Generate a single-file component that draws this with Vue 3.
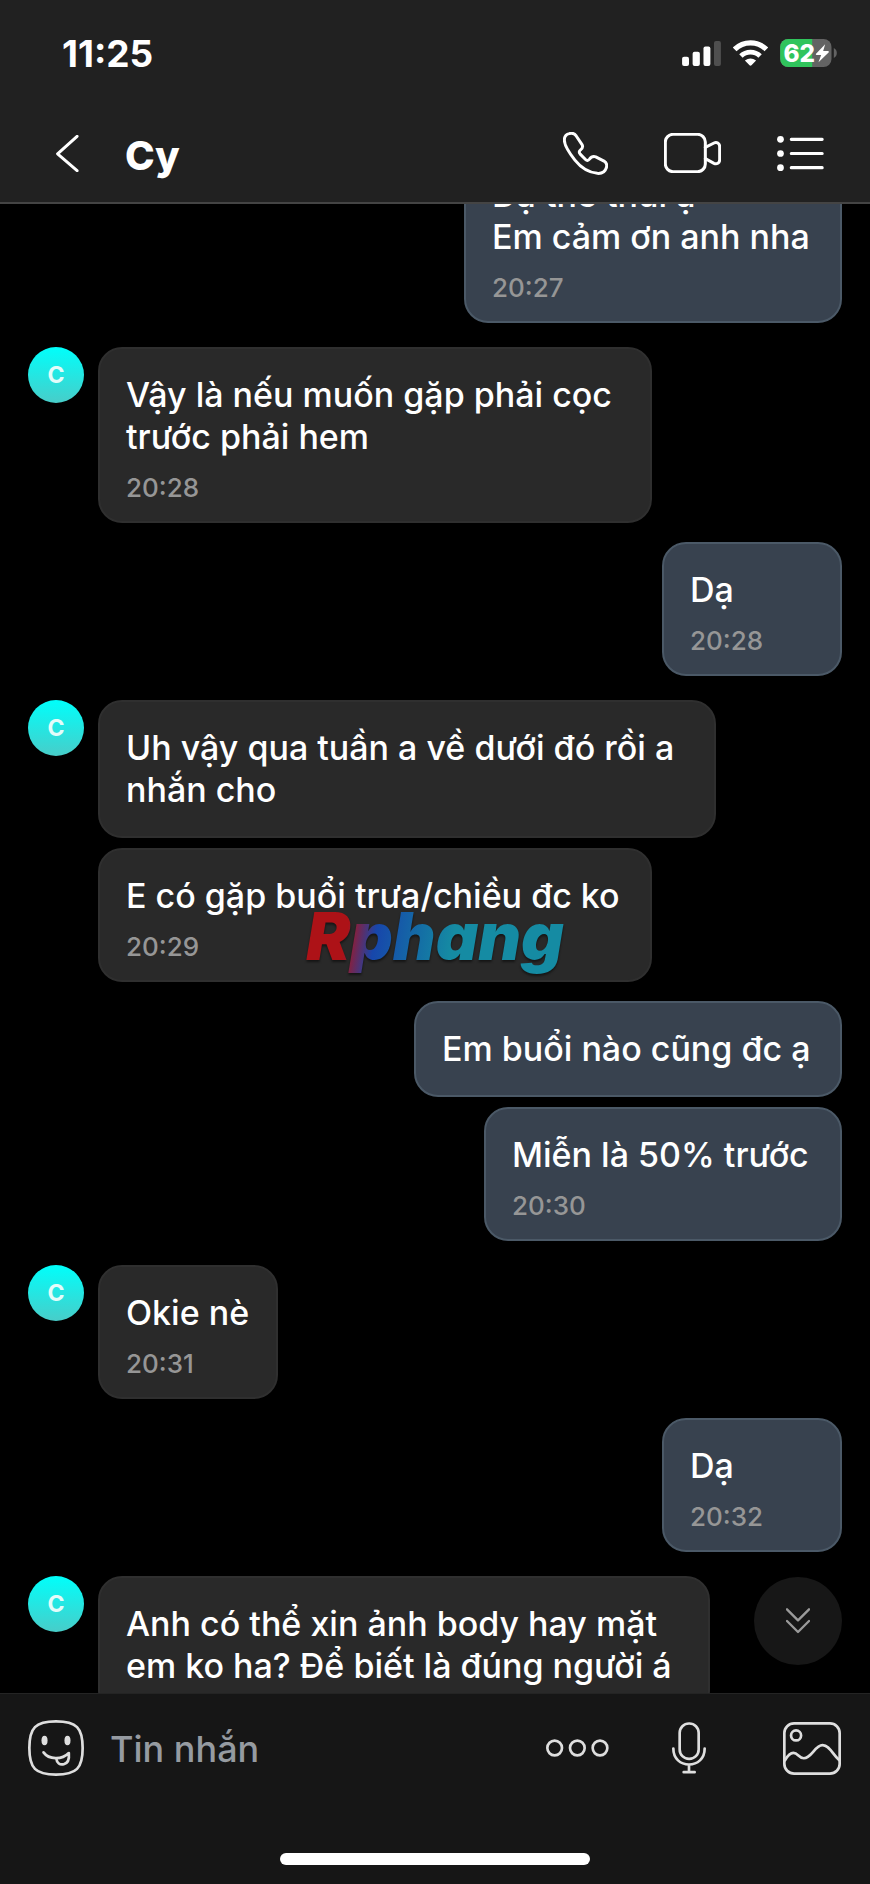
<script setup>
import { onMounted, ref } from 'vue'

const groups = [
  {
    side: 'sent',
    messages: [{ text: 'Dạ thế thui ạ\nEm cảm ơn anh nha', time: '20:27', width: 378 }],
  },
  {
    side: 'received',
    messages: [{ text: 'Vậy là nếu muốn gặp phải cọc\ntrước phải hem', time: '20:28', width: 554 }],
  },
  { side: 'sent', messages: [{ text: 'Dạ', time: '20:28', width: 180 }] },
  {
    side: 'received',
    messages: [
      { text: 'Uh vậy qua tuần a về dưới đó rồi a\nnhắn cho', time: '', width: 618 },
      { text: 'E có gặp buổi trưa/chiều đc ko', time: '20:29', width: 554 },
    ],
  },
  {
    side: 'sent',
    messages: [
      { text: 'Em buổi nào cũng đc ạ', time: '', width: 428 },
      { text: 'Miễn là 50% trước', time: '20:30', width: 358 },
    ],
  },
  { side: 'received', messages: [{ text: 'Okie nè', time: '20:31', width: 180 }] },
  { side: 'sent', messages: [{ text: 'Dạ', time: '20:32', width: 180 }] },
  {
    side: 'received',
    messages: [
      { text: 'Anh có thể xin ảnh body hay mặt\nem ko ha? Để biết là đúng người á', time: '', width: 612 },
    ],
  },
]

const draft = ref('')
const scroller = ref(null)

// The conversation opens part-way through the first message.
onMounted(() => {
  scroller.value.scrollTop = 57
})

function scrollToEnd() {
  scroller.value.scrollTop = scroller.value.scrollHeight
}
</script>

<template>
  <div class="phone">
    <header class="top">
      <div class="status">
        <span class="clock">11:25</span>
        <div class="indicators">
          <svg width="39" height="25" viewBox="741 122 118 76" aria-hidden="true">
            <g fill="#fff">
              <rect x="741" y="170" width="21" height="28" rx="6" />
              <rect x="773" y="155" width="22" height="43" rx="6" />
              <rect x="806" y="139" width="21" height="59" rx="6" />
            </g>
            <rect x="838" y="122" width="21" height="76" rx="6" fill="#4f4f4f" />
          </svg>
          <svg width="35" height="26" viewBox="894 120 106 78" aria-hidden="true">
            <path d="M899 148A68 68 0 0 1 995 148" fill="none" stroke="#fff" stroke-width="16" />
            <path d="M918 168A42 42 0 0 1 976 168" fill="none" stroke="#fff" stroke-width="15" />
            <path d="M930 182Q947 169 964 182L950 196Q947 199 944 196Z" fill="#fff" />
          </svg>
          <svg width="57" height="28" viewBox="1035 119 170 84" role="img" aria-label="62%">
            <rect x="1035" y="119" width="154" height="84" rx="24" fill="#636363" />
            <path d="M1131 119H1059A24 24 0 0 0 1035 143V179A24 24 0 0 0 1059 203H1131Z" fill="#30c45c" />
            <path d="M1196 146Q1205 151 1205 161T1196 176Z" fill="#636363" />
            <text class="charge" x="1045" y="188">62</text>
            <path d="M1170 135L1142 164Q1141 167 1145 167H1158L1150 189L1181 159Q1182 155 1178 155H1164Z" fill="#fff" />
          </svg>
        </div>
      </div>
      <nav class="bar">
        <button class="icon" aria-label="Back">
          <svg width="23" height="37" viewBox="168 405 68 112">
            <path class="line" d="M231 409L172 462L231 513" />
          </svg>
        </button>
        <h1 class="name">Cy</h1>
        <div class="actions">
          <button class="icon" aria-label="Call">
            <svg width="45" height="43" viewBox="384 395 136 130">
              <path
                class="line"
                d="M403 400C412 397 419 400 424 407L442 434C445 440 442 445 437 449C432 453 432 457 436 462L452 478C456 482 460 482 464 477C469 470 476 468 483 470L508 483C516 488 518 494 515 503C511 516 501 521 488 520C459 517 436 500 420 480C402 457 388 433 388 419C388 409 394 402 403 400Z"
              />
            </svg>
          </button>
          <button class="icon" aria-label="Video call">
            <svg width="57" height="40" viewBox="687 399 171 120">
              <rect class="line" x="691" y="403" width="120" height="112" rx="23" />
              <path class="line" d="M811 442L837 429C845 425 854 430 854 440V479C854 489 845 494 837 490L811 476" />
            </svg>
          </button>
          <button class="icon" aria-label="Menu">
            <svg width="47" height="35" viewBox="1028 408 139 104">
              <g fill="#fff">
                <circle cx="1038" cy="418" r="10" />
                <circle cx="1038" cy="460" r="10" />
                <circle cx="1038" cy="502" r="10" />
              </g>
              <path class="line" d="M1070 418H1162M1070 460H1162M1070 502H1162" />
            </svg>
          </button>
        </div>
      </nav>
    </header>

    <main class="chat">
      <div ref="scroller" class="scroller">
        <section v-for="(group, g) in groups" :key="g" class="group" :class="group.side">
          <span v-if="group.side === 'received'" class="avatar">C</span>
          <div class="stack">
            <article
              v-for="(message, m) in group.messages"
              :key="m"
              class="bubble"
              :style="{ minWidth: message.width + 'px' }"
            >
              <p class="text">{{ message.text }}</p>
              <time v-if="message.time" class="time">{{ message.time }}</time>
            </article>
          </div>
        </section>
      </div>
      <button class="jump" aria-label="Scroll to latest" @click="scrollToEnd">
        <svg width="24" height="26" viewBox="1054 144 72 78">
          <path d="M1057 148L1090 181L1123 148M1057 183L1090 216L1123 183" />
        </svg>
      </button>
    </main>

    <footer class="bottom">
      <form class="composer" @submit.prevent>
        <button class="icon" type="button" aria-label="Stickers">
          <svg width="56" height="56" viewBox="84 483 166 166">
            <path class="soft" d="M167 487C228 487 246 506 246 566C246 626 228 645 167 645C106 645 88 626 88 566C88 506 106 487 167 487Z" />
            <ellipse cx="133" cy="544" rx="9" ry="14" fill="#dedede" />
            <ellipse cx="201" cy="544" rx="9" ry="14" fill="#dedede" />
            <path class="soft" d="M130 579C146 601 184 602 205 581M168 597C169 611 179 617 190 614C202 611 207 600 205 581" />
          </svg>
        </button>
        <input v-model="draft" class="field" type="text" placeholder="Tin nhắn" aria-label="Tin nhắn" />
        <button class="icon more" type="button" aria-label="More">
          <svg width="63" height="18" viewBox="334 538 189 54">
            <circle class="soft" cx="360" cy="565" r="22" />
            <circle class="soft" cx="428" cy="565" r="22" />
            <circle class="soft" cx="496" cy="565" r="22" />
          </svg>
        </button>
        <button class="icon voice" type="button" aria-label="Voice message">
          <svg width="34" height="52" viewBox="711 490 102 155">
            <rect class="soft" x="734" y="494" width="57" height="106" rx="28" />
            <path class="soft" d="M715 569C715 600 737 617 762 617C787 617 809 600 809 569M762 617V640M746 640H779" />
          </svg>
        </button>
        <button class="icon" type="button" aria-label="Photos">
          <svg width="58" height="53" viewBox="1045 486 173 158">
            <rect class="soft" x="1049" y="490" width="165" height="150" rx="29" />
            <circle class="soft" cx="1084" cy="526" r="15" />
            <path class="soft" d="M1051 600C1060 584 1068 578 1076 578C1090 578 1092 594 1107 594C1131 594 1140 555 1163 555C1184 555 1192 582 1213 600" />
          </svg>
        </button>
      </form>
      <div class="home"></div>
    </footer>

    <div class="watermark">Rphang</div>
  </div>
</template>

<style>
body {
  margin: 0;
  background: #000;
}
</style>

<style scoped>
.phone {
  position: relative;
  display: flex;
  flex-direction: column;
  height: 100vh;
  overflow: hidden;
  background: #000;
  color: #fff;
  font-family: Inter, 'Liberation Sans', sans-serif;
}

.top {
  background: #212121;
  border-bottom: 2px solid #444;
}

.status {
  display: flex;
  align-items: center;
  justify-content: space-between;
  height: 106px;
  padding: 0 33px 0 62px;
}

.clock {
  padding-top: 2px;
  font-size: 37px;
  font-weight: 700;
  line-height: 42px;
}

.indicators {
  display: flex;
  align-items: center;
  gap: 12px;
}

svg {
  display: block;
}

.charge {
  fill: #fff;
  font-size: 73px;
  font-weight: 800;
}

.bar {
  box-sizing: border-box;
  display: flex;
  align-items: center;
  height: 96px;
  padding: 0 46px 2px 56px;
}

.icon {
  flex: none;
  padding: 0;
  border: 0;
  background: none;
}

.line {
  fill: none;
  stroke: #fff;
  stroke-width: 9;
  stroke-linecap: round;
  stroke-linejoin: round;
}

.soft {
  fill: none;
  stroke: #dedede;
  stroke-width: 8;
  stroke-linecap: round;
  stroke-linejoin: round;
}

.name {
  flex: 1;
  margin: 0 0 0 46px;
  padding-top: 6px;
  font-size: 40px;
  font-weight: 800;
  line-height: 48px;
}

.actions {
  display: flex;
  align-items: center;
  gap: 56px;
}

.chat {
  position: relative;
  flex: 1;
  min-height: 0;
}

.scroller {
  height: 100%;
  overflow-y: auto;
  scrollbar-width: none;
}

.group {
  display: flex;
  gap: 14px;
  padding: 0 28px;
}

.group + .sent {
  margin-top: 19px;
}

.group + .received {
  margin-top: 24px;
}

.sent {
  justify-content: flex-end;
}

.avatar {
  flex: none;
  width: 56px;
  height: 56px;
  border-radius: 50%;
  background: linear-gradient(#00fffb, #48cdc9);
  color: #e4fcfa;
  font-size: 23px;
  font-weight: 700;
  line-height: 56px;
  text-align: center;
}

.stack {
  display: flex;
  flex-direction: column;
  align-items: flex-start;
  gap: 10px;
}

.sent .stack {
  align-items: flex-end;
}

.bubble {
  box-sizing: border-box;
  max-width: 100%;
  padding: 25px 26px 18px;
  border: 2px solid #2f2f2f;
  border-radius: 24px;
  background: #292929;
}

.sent .bubble {
  border-color: #4b5967;
  background: #38424f;
}

.text {
  margin: 0;
  font-size: 34px;
  font-weight: 500;
  line-height: 42px;
  white-space: pre-line;
}

.text:last-child {
  padding-bottom: 7px;
}

.time {
  display: block;
  margin-top: 15px;
  color: #969696;
  font-size: 26px;
  font-weight: 500;
  line-height: 30px;
}

.jump {
  position: absolute;
  right: 28px;
  bottom: 28px;
  display: flex;
  align-items: center;
  justify-content: center;
  width: 88px;
  height: 88px;
  padding: 0;
  border: 0;
  border-radius: 50%;
  background: #171717;
}

.jump path {
  fill: none;
  stroke: #9a9a9a;
  stroke-width: 7;
  stroke-linecap: round;
  stroke-linejoin: round;
}

.bottom {
  display: flex;
  flex-direction: column;
  align-items: center;
  background: #161616;
  border-top: 1px solid #242424;
}

.composer {
  box-sizing: border-box;
  display: flex;
  align-items: center;
  width: 100%;
  height: 108px;
  padding: 0 29px 0 28px;
}

.field {
  flex: 1;
  min-width: 0;
  margin: 0 26px;
  padding: 2px 0 0;
  border: 0;
  outline: 0;
  background: none;
  color: #fff;
  font-family: inherit;
  font-size: 36px;
  font-weight: 500;
  line-height: 44px;
}

.field::placeholder {
  color: #969ba1;
  opacity: 1;
}

.more {
  margin-right: 63px;
}

.voice {
  margin-right: 77px;
}

.home {
  width: 310px;
  height: 12px;
  margin: 51px 0 19px;
  border-radius: 6px;
  background: #fff;
}

.watermark {
  position: absolute;
  top: 50%;
  left: 50%;
  padding: 0 8px 12px;
  transform: translate(-50%, -50%);
  background: linear-gradient(100deg, #ad1217 19%, #1746ab 29%, #146da5 44%, #158ba3 56%);
  background-clip: text;
  color: transparent;
  filter: drop-shadow(0 2px 1px rgba(0, 0, 0, 0.5));
  font-size: 66px;
  font-style: italic;
  font-weight: 900;
  line-height: 80px;
  pointer-events: none;
}
</style>
